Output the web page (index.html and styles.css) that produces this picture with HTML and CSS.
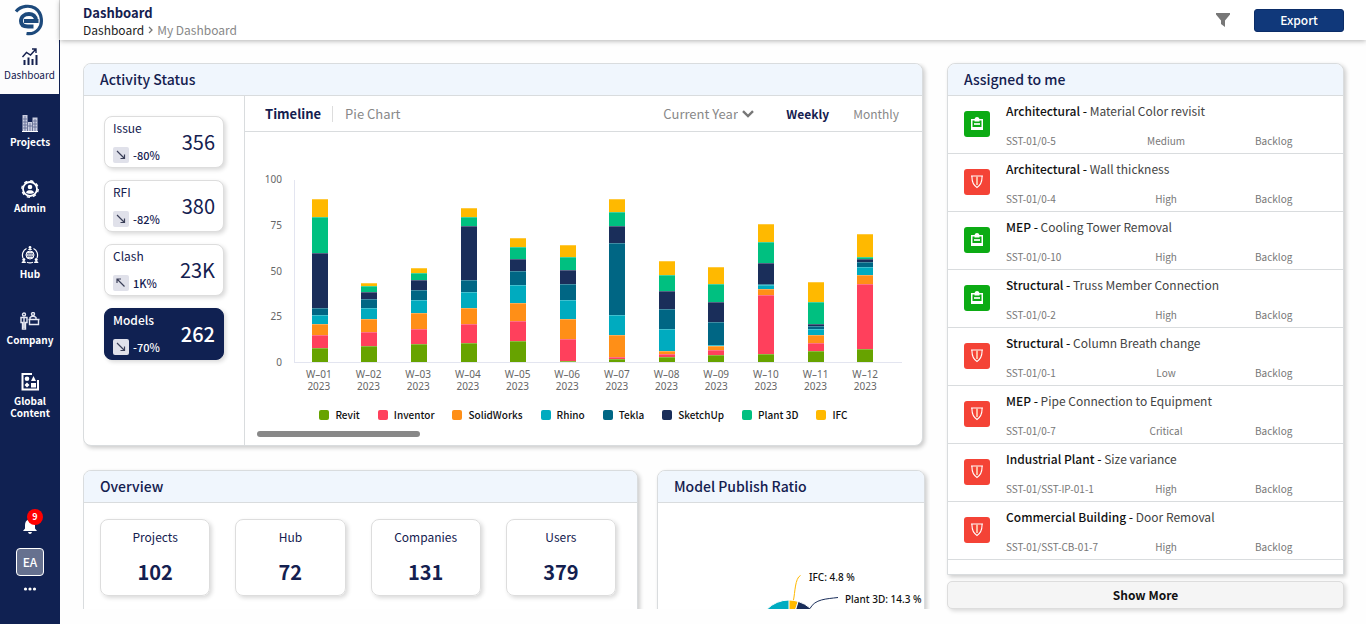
FILE: index.html
```html
<!DOCTYPE html>
<html lang="en">
<head>
<meta charset="utf-8">
<meta name="viewport" content="width=device-width, initial-scale=1">
<title>Dashboard</title>
<link rel="stylesheet" href="styles.css">
</head>
<body>
<div class="app">
  <nav class="sidebar" aria-label="Main">
    <a class="logo" href="#" aria-label="Home">
      <svg width="32" height="32" viewBox="0 0 32 32" fill="none" stroke="#1d4a7c">
        <path d="M3 7.500C8 1.500 17 1 22 4.200C29.500 9 30 20 25.500 25.200C22.500 28.800 18.500 30.300 13.500 29.500" stroke-width="3.200"/>
        <path d="M25.500 17H11M23.200 17C23 12 19.500 10 16 10C11.500 10 8 12.800 8 17C8 21 11 22.500 15 22.500H20.500" stroke-width="4"/>
      </svg>
    </a>
    <a class="nav-item active" href="#">
      <svg width="18" height="18" viewBox="0 0 18 18" fill="none" stroke="currentColor">
        <path d="M3.500 17v-5M7.500 17V9.500M11.500 17v-6M15.500 17V7" stroke-width="2"/>
        <path d="M1.500 9l4-4.500 4 2.500 5-5.500M11 1h4v4" stroke-width="1.400"/>
      </svg>
      <span>Dashboard</span>
    </a>
    <a class="nav-item" href="#">
      <svg width="18" height="18" viewBox="0 0 18 18">
        <path d="M1.500 18V1h5v17zM7 18V8h4v10zM11.500 18V3.500h5V18z" fill="#c9cde0"/>
        <path d="M4 2v15M9 9v8M14 5v12M2 5h4M2 8h4M2 11h4M2 14h4M12 7h4M12 10h4M12 13h4M7 12h4" stroke="#5a648f" stroke-width=".8" fill="none"/>
        <path d="M1 17.500h16" stroke="#fff"/>
      </svg>
      <span>Projects</span>
    </a>
    <a class="nav-item" href="#">
      <svg width="18" height="18" viewBox="0 0 18 18">
        <circle cx="9" cy="9" r="7" fill="none" stroke="#fff" stroke-width="1.800"/>
        <circle cx="9" cy="9" r="8.200" fill="none" stroke="#fff" stroke-width="1.400" stroke-dasharray="3.200 3.240"/>
        <circle cx="9" cy="7" r="2.300" fill="#fff"/>
        <path d="M5 12.500C5.500 10.700 7 10.200 9 10.200s3.500 .5 4 2.300C12 13.600 10.500 13.800 9 13.800S6 13.600 5 12.500z" fill="#fff"/>
      </svg>
      <span>Admin</span>
    </a>
    <a class="nav-item" href="#">
      <svg width="18" height="18" viewBox="0 0 18 18" fill="none" stroke="#fff">
        <circle cx="9" cy="9" r="4"/>
        <path d="M9 5v8M5 9h8M6 6.500h6M6 11.500h6M7.500 5.500q-1.500 3.500 0 7M10.500 5.500q1.500 3.500 0 7" stroke-width=".8"/>
        <path d="M5.500 2.500A7.500 7.500 0 0 0 2 12M12.500 2.500A7.500 7.500 0 0 1 16 12M6 16.300a7.500 7.500 0 0 0 6 0" stroke-width="1.200"/>
        <path d="M7 4q0-1.500 2-1.500T11 4zM.5 17q0-2 2.200-2t2.300 2zM13 17q0-2 2.200-2t2.300 2z" fill="#fff" stroke="none"/>
        <g fill="#fff" stroke="none"><circle cx="9" cy="1.400" r="1.400"/><circle cx="2.800" cy="13.500" r="1.500"/><circle cx="15.200" cy="13.500" r="1.500"/></g>
      </svg>
      <span>Hub</span>
    </a>
    <a class="nav-item" href="#">
      <svg width="20" height="18" viewBox="0 0 20 18" fill="none" stroke="#e6e8f2" stroke-width="1.400">
        <circle cx="4" cy="2.500" r="1.500"/>
        <path d="M1 5.500h6v5H5.500V17h-3v-6.500H1zM4 6v10" />
        <circle cx="13" cy="2" r="1.500"/>
        <path d="M10 7V5.500q3-2.500 6 0V7M8.500 7.500h11M9.500 8v4.500h9V8"/>
      </svg>
      <span>Company</span>
    </a>
    <a class="nav-item nav-tall" href="#">
      <svg width="18" height="18" viewBox="0 0 18 18" fill="none" stroke="#fff">
        <path d="M11 1H1.500v15.500H17V7" stroke-width="2"/>
        <circle cx="6" cy="5.800" r="2.300" fill="#fff" stroke="none"/>
        <path d="M12.500 3l2.500 5h-5zM6 9.500l2.500 2.500L6 14.500 3.500 12zM10 10h5v4.500h-5z" fill="#fff" stroke="none"/>
      </svg>
      <span>Global Content</span>
    </a>
    <div class="side-foot">
      <button class="bell" type="button" aria-label="Notifications">
        <svg width="14" height="16" viewBox="0 0 14 16" fill="#fff"><path d="M7 0l1 1.200C11 2 12 4.500 12 7v3.500L14 13H0l2-2.500V7C2 4.500 3 2 6 1.200zM5 14h4q-.5 2-2 2t-2-2z"/></svg>
        <span class="badge">9</span>
      </button>
      <button class="avatar" type="button">EA</button>
      <button class="more" type="button" aria-label="More">
        <svg width="14" height="4" viewBox="0 0 14 4" fill="#fff"><circle cx="2.500" cy="2" r="1.600"/><circle cx="7" cy="2" r="1.600"/><circle cx="11.500" cy="2" r="1.600"/></svg>
      </button>
    </div>
  </nav>

  <div class="page">
    <header class="topbar">
      <div class="heading">
        <h1>Dashboard</h1>
        <div class="crumbs">
          <a href="#">Dashboard</a>
          <svg width="5" height="8" viewBox="0 0 5 8" fill="none" stroke="#777" stroke-width="1.300"><path d="M1 1l3 3-3 3"/></svg>
          <span>My Dashboard</span>
        </div>
      </div>
      <button class="filter" type="button" aria-label="Filter">
        <svg width="14" height="14" viewBox="0 0 14 14" fill="#777"><path d="M0 0h14v1.500L9 7.500V14l-4-3V7.500L0 1.500z"/></svg>
      </button>
      <button class="export" type="button">Export</button>
    </header>

    <main class="content">
      <div class="left">
        <section class="card activity-card">
          <h2>Activity Status</h2>
          <div class="activity">
            <div class="stats">
              <button class="stat" type="button"><span class="name">Issue</span><span class="trend"><svg class="arrow" viewBox="0 0 16 16"><path d="M4 4l7.500 7.500M7.500 11.500h4v-4"/></svg>-80%</span><span class="num">356</span></button>
              <button class="stat" type="button"><span class="name">RFI</span><span class="trend"><svg class="arrow" viewBox="0 0 16 16"><path d="M4 4l7.500 7.500M7.500 11.500h4v-4"/></svg>-82%</span><span class="num">380</span></button>
              <button class="stat" type="button"><span class="name">Clash</span><span class="trend"><svg class="arrow" viewBox="0 0 16 16"><path d="M11.500 11.500L4 4M4 8V4h4"/></svg>1K%</span><span class="num">23K</span></button>
              <button class="stat selected" type="button"><span class="name">Models</span><span class="trend"><svg class="arrow" viewBox="0 0 16 16"><path d="M4 4l7.500 7.500M7.500 11.500h4v-4"/></svg>-70%</span><span class="num">262</span></button>
            </div>
            <div class="chart-side">
              <div class="tabs">
                <button class="tab view on" type="button">Timeline</button>
                <button class="tab view pie-tab" type="button">Pie Chart</button>
                <span class="period">
                  <select aria-label="Period"><option>Current Year</option></select>
                  <svg width="12" height="8" viewBox="0 0 12 8" fill="none" stroke="#777" stroke-width="2.400"><path d="M1 1.200l5 4.800 5-4.800"/></svg>
                </span>
                <button class="tab on" type="button">Weekly</button>
                <button class="tab" type="button">Monthly</button>
              </div>
              <div class="chart">
                <div class="y-axis"><span>100</span><span>75</span><span>50</span><span>25</span><span>0</span></div>
                <div class="plot" id="plot"></div>
                <div class="x-axis" id="weeks"></div>
              </div>
              <ul class="legend">
                <li><i class="revit"></i>Revit</li>
                <li><i class="inventor"></i>Inventor</li>
                <li><i class="solidworks"></i>SolidWorks</li>
                <li><i class="rhino"></i>Rhino</li>
                <li><i class="tekla"></i>Tekla</li>
                <li><i class="sketchup"></i>SketchUp</li>
                <li><i class="plant3d"></i>Plant 3D</li>
                <li><i class="ifc"></i>IFC</li>
              </ul>
              <div class="scroll-track"><div class="scroll-thumb"></div></div>
            </div>
          </div>
        </section>

        <div class="row">
          <section class="card">
            <h2>Overview</h2>
            <div class="totals">
              <div class="total"><span>Projects</span><strong>102</strong></div>
              <div class="total"><span>Hub</span><strong>72</strong></div>
              <div class="total"><span>Companies</span><strong>131</strong></div>
              <div class="total"><span>Users</span><strong>379</strong></div>
            </div>
          </section>
          <section class="card">
            <h2>Model Publish Ratio</h2>
            <svg class="pie" viewBox="0 0 266 190" role="img" aria-label="Model publish ratio">
              <g stroke="#fff" stroke-width="1">
                <circle cx="131" cy="128" r="31" fill="#00acc1"/>
                <path d="M131 128V97A31 31 0 0 1 140.200 98.400z" fill="#ffb900"/>
                <path d="M131 128L140.200 98.400A31 31 0 0 1 159.800 116.500z" fill="#1a2e5a"/>
              </g>
              <path d="M135.500 97C137 90 137 75 142.500 72.500" fill="none" stroke="#ffb900"/>
              <path d="M152 105.500C157 96 168 96 180 94.500" fill="none" stroke="#1a2e5a"/>
              <text x="151" y="78">IFC: 4.8 %</text>
              <text x="187" y="100">Plant 3D: 14.3 %</text>
            </svg>
          </section>
        </div>
      </div>

      <aside class="right">
        <section class="card assigned">
          <h2>Assigned to me</h2>
          <ul class="tasks" id="tasks"></ul>
        </section>
        <button class="show-more" type="button">Show More</button>
      </aside>
    </main>
  </div>
</div>
<script src="script.js"></script>
</body>
</html>
```

FILE: styles.css
```css
* { box-sizing: border-box; }
body {
  margin: 0;
  color: #14204f;
  background: #fefefe;
  font: 12px/16px "Noto Sans CJK SC", "Noto Sans", sans-serif;
}
button, select { font: inherit; color: inherit; background: none; border: 0; padding: 0; margin: 0; cursor: pointer; }
a { color: inherit; text-decoration: none; }
ul { list-style: none; margin: 0; padding: 0; }
h1, h2 { margin: 0; }
svg { display: block; flex: none; }

.app { display: flex; height: 100vh; overflow: hidden; }

.sidebar { flex: none; width: 60px; display: flex; flex-direction: column; background: #102152; color: #fff; }
.logo { height: 40px; padding-right: 2px; display: flex; justify-content: center; align-items: center; background: #fefefe; border-right: 1px solid #ddd; }
.nav-item { height: 66px; display: flex; flex-direction: column; align-items: center; justify-content: center; gap: 4px; font-size: 10px; line-height: 12px; font-weight: 700; text-align: center; }
.nav-item.active { height: 54px; padding-bottom: 5px; margin: 0 1px 4px 0; gap: 3px; background: #fcfcfd; color: #14204f; font-weight: 400; }
.nav-tall { height: 68px; padding: 0 8px; }
.side-foot { margin-top: auto; padding-bottom: 29px; display: flex; flex-direction: column; align-items: center; }
.bell { position: relative; padding: 8px; display: block; }
.badge { position: absolute; left: 12px; top: -1px; width: 16px; height: 16px; border-radius: 50%; background: #f00; color: #fff; font-size: 9px; line-height: 16px; font-weight: 700; }
.avatar { width: 28px; height: 28px; margin: 6px 0 7px; border: 1px solid #fff; border-radius: 4px; background: #66718f; font-size: 12px; font-weight: 500; }
.more { padding: 4px; }

.page { flex: 1; min-width: 0; display: flex; flex-direction: column; }
.topbar { flex: none; height: 40px; padding: 0 22px 0 23px; display: flex; align-items: center; background: #fff; box-shadow: 0 1px 5px rgba(0, 0, 0, .3); }
.heading { flex: 1; padding-top: 2px; }
h1 { font-size: 13px; line-height: 18px; font-weight: 700; }
.crumbs { display: flex; align-items: center; gap: 4px; line-height: 16px; color: #888; }
.crumbs a { color: #222; }
.filter { padding: 4px; margin-right: 20px; }
.export { width: 90px; height: 23px; border-radius: 3px; background: #10387a; border: 1px solid #0b2d68; color: #fff; line-height: 18px; font-weight: 500; }

.content { flex: 1; min-height: 0; display: grid; grid-template-columns: 847fr 397fr; gap: 17px; padding: 23px 22px 15px 23px; }
.left { min-width: 0; overflow: hidden; padding-right: 5px; display: flex; flex-direction: column; gap: 24px; }
.card { flex: none; min-width: 0; background: #fff; border: 1px solid #d9dcde; border-radius: 8px; box-shadow: 2px 2px 4px rgba(0, 0, 0, .2); }
.card h2 { height: 32px; padding: 0 16px; border-bottom: 1px solid #d9dcde; border-radius: 7px 7px 0 0; background: #f0f6fd; font-size: 14px; line-height: 30px; font-weight: 500; }
.activity-card { margin-right: 2px; }

.activity { display: grid; grid-template-columns: 161px 1fr; }
.stats { display: flex; flex-direction: column; gap: 12px; padding: 20px; border-right: 1px solid #d9dcde; }
.stat { display: grid; grid-template: 22px 1fr / 1fr auto; width: 120px; height: 52px; padding: 1px 8px 2px; border: 1px solid #ddd; border-radius: 8px; background: #fff; box-shadow: 2px 2px 4px rgba(0, 0, 0, .15); text-align: left; }
.stat .name { grid-column: 1; line-height: 20px; }
.stat .trend { grid-column: 1; grid-row: 2; display: flex; align-items: center; gap: 4px; padding-top: 4px; font-size: 11px; font-weight: 500; }
.stat .num { grid-column: 2; grid-row: 1 / 3; align-self: center; font-size: 20px; line-height: 28px; }
.arrow { width: 16px; height: 16px; border-radius: 2px; background: #e0e1ea; fill: none; stroke: #3a3f58; stroke-width: 1.2; }
.stat.selected { background: #102152; border-color: #102152; color: #fff; font-weight: 500; }

.chart-side { min-width: 0; display: flex; flex-direction: column; padding-bottom: 8px; }
.tabs { height: 36px; padding: 0 23px 0 20px; border-bottom: 1px solid #d9dcde; display: flex; align-items: center; }
.tab { color: #888; font-size: 12px; }
.tab.view { font-size: 13px; }
.tab.on { color: #14204f; font-weight: 700; }
.tab.pie-tab { margin: 0 auto 0 11px; padding-left: 12px; border-left: 1px solid #ddd; }
.period { display: flex; align-items: center; gap: 4px; margin-right: 32px; color: #888; font-size: 13px; }
.period select { appearance: none; }
.tab + .tab:last-child { margin-left: 24px; }

.chart { display: grid; grid-template-columns: 49px 1fr; padding: 48px 20px 0 0; }
.y-axis { height: 195px; margin: -7px 0 -5px; padding-right: 12px; display: flex; flex-direction: column; justify-content: space-between; text-align: right; color: #666; font: 10px/12px "Noto Sans", sans-serif; }
.plot { height: 183px; display: flex; border-left: 1px solid #e3e5f0; border-bottom: 1px solid #e3e5f0; padding-right: 12px; }
.stack { flex: 1; display: flex; flex-direction: column-reverse; align-items: center; }
.seg { width: 16px; box-shadow: inset 0 1px rgba(255, 255, 255, .25); }
.x-axis { grid-column: 2; display: flex; padding: 5px 12px 0 0; }
.x-axis div { flex: 1; display: flex; flex-direction: column; align-items: center; color: #666; font: 10px/12px "Noto Sans", sans-serif; }
.revit { background: #67a300; }
.inventor { background: #ff405c; }
.solidworks { background: #ff8f17; }
.rhino { background: #00abbf; }
.tekla { background: #006684; }
.sketchup { background: #1a2e5a; }
.plant3d { background: #00c080; }
.ifc { background: #ffb900; }
.legend { display: flex; justify-content: center; gap: 18px; padding: 15px 0 0; color: #111; font-size: 10px; font-weight: 500; }
.legend li { display: flex; align-items: center; gap: 6px; }
.legend i { width: 10px; height: 10px; border-radius: 2px; }
.scroll-track { margin: 8px 12px 0; }
.scroll-thumb { width: 25%; height: 6px; border-radius: 3px; background: #888; }

.row { flex: none; display: grid; grid-template-columns: 555fr 268fr; gap: 19px; }
.totals { display: grid; grid-template-columns: repeat(4, 1fr); gap: 25px; padding: 16px 21px 32px 16px; }
.total { height: 77px; display: flex; flex-direction: column; align-items: center; gap: 14px; padding-top: 8px; border: 1px solid #ddd; border-radius: 8px; box-shadow: 2px 2px 4px rgba(0, 0, 0, .15); }
.total strong { font-size: 20px; line-height: 24px; font-weight: 700; }
.total span { line-height: 18px; }
.pie { width: 100%; overflow: hidden; }
.pie text { font: 10px "Noto Sans", sans-serif; font-weight: 500; fill: #111; }

.right { min-width: 0; display: flex; flex-direction: column; gap: 6px; }
.assigned { flex: 1; min-height: 0; overflow: hidden; border-radius: 8px 8px 0 0; }
.task { display: grid; grid-template: 24px 1fr / 26px 114px 60px 1fr; column-gap: 16px; align-items: end; height: 58px; padding: 3px 16px 4px; border-bottom: 1px solid #d9dcde; font-size: 10px; color: #777; }
.task p { grid-column: 2 / 5; margin: 0; font-size: 12px; line-height: 24px; color: #444; }
.task b { color: #111; font-weight: 500; }
.task .mark { grid-row: 1 / 3; align-self: center; width: 26px; height: 26px; border-radius: 3px; display: grid; place-items: center; }
.mark.rfi { background: #0cab14; }
.mark.issue { background: #f44336; }
.task .level { text-align: center; }
.task .state { padding-left: 43px; }
.show-more { height: 28px; border: 1px solid #ddd; border-radius: 5px; background: #f5f5f5; box-shadow: 2px 2px 4px rgba(0, 0, 0, .15); color: #111; font-weight: 700; }
```

FILE: script.js
```js
const series = ["revit", "inventor", "solidworks", "rhino", "tekla", "sketchup", "plant3d", "ifc"];
const weeks = [
  [7.7, 7, 6, 5, 4.2, 30.2, 19.6, 10],
  [9, 7.7, 7.1, 5.9, 5.1, 3.8, 3.1, 2],
  [10, 8.4, 8.6, 7.1, 5.5, 5.3, 3.8, 3.1],
  [10.6, 10.3, 8.8, 8.6, 7, 29.7, 4.8, 4.6],
  [11.5, 11, 10.1, 9.5, 7.7, 7, 6.4, 4.8],
  [0.6, 12.1, 11.2, 10.2, 8.8, 7.9, 7, 6.4],
  [1.6, 0.9, 12.1, 11, 39.9, 9.3, 7.9, 7.1],
  [2.7, 1.6, 1.5, 12.1, 11, 10.1, 8.6, 8.2],
  [3.7, 2.9, 2.4, 0.5, 12.3, 11, 9.9, 9.5],
  [4.6, 32.2, 3.1, 2.2, 0.9, 11.7, 11, 10.3],
  [5.9, 4.6, 4.2, 3.3, 2, 0.9, 11.9, 11],
  [7, 35.9, 4.8, 4.6, 2.6, 2, 0.9, 12.6]
];

document.getElementById("plot").innerHTML = weeks.map(values =>
  `<div class="stack">${values.map((v, i) => `<div class="seg ${series[i]}" style="height:${v}%"></div>`).join("")}</div>`
).join("");

document.getElementById("weeks").innerHTML = weeks.map((_, i) =>
  `<div><span>W–${String(i + 1).padStart(2, "0")}</span><span>2023</span></div>`
).join("");

const icons = {
  rfi: '<svg width="12" height="14" viewBox="0 0 12 14"><path d="M0 2h3.500q.5-2 2.500-2t2.500 2H12v11H0z" fill="#fff"/><path d="M1.500 3.500h2v1h5v-1h2v6.500h-9z" fill="#0cab14"/><path d="M3 6h6v2H3z" fill="#d5f3d6"/></svg>',
  issue: '<svg width="12" height="14" viewBox="0 0 12 14" fill="none" stroke="#fff" stroke-width="1.100"><path d="M0 1h12M1 1q-.5 8 5 11.500Q11.500 9 11 1"/><path d="M6 1.500v8.500" stroke="#ffd9b8" stroke-width="1.600"/></svg>'
};
const tasks = [
  ["rfi", "Architectural", "Material Color revisit", "SST-01/0-5", "Medium"],
  ["issue", "Architectural", "Wall thickness", "SST-01/0-4", "High"],
  ["rfi", "MEP", "Cooling Tower Removal", "SST-01/0-10", "High"],
  ["rfi", "Structural", "Truss Member Connection", "SST-01/0-2", "High"],
  ["issue", "Structural", "Column Breath change", "SST-01/0-1", "Low"],
  ["issue", "MEP", "Pipe Connection to Equipment", "SST-01/0-7", "Critical"],
  ["issue", "Industrial Plant", "Size variance", "SST-01/SST-IP-01-1", "High"],
  ["issue", "Commercial Building", "Door Removal", "SST-01/SST-CB-01-7", "High"]
];
document.getElementById("tasks").innerHTML = tasks.map(([kind, group, title, code, level]) =>
  `<li class="task"><span class="mark ${kind}">${icons[kind]}</span><p><b>${group} -</b> ${title}</p><span>${code}</span><span class="level">${level}</span><span class="state">Backlog</span></li>`
).join("");
```
